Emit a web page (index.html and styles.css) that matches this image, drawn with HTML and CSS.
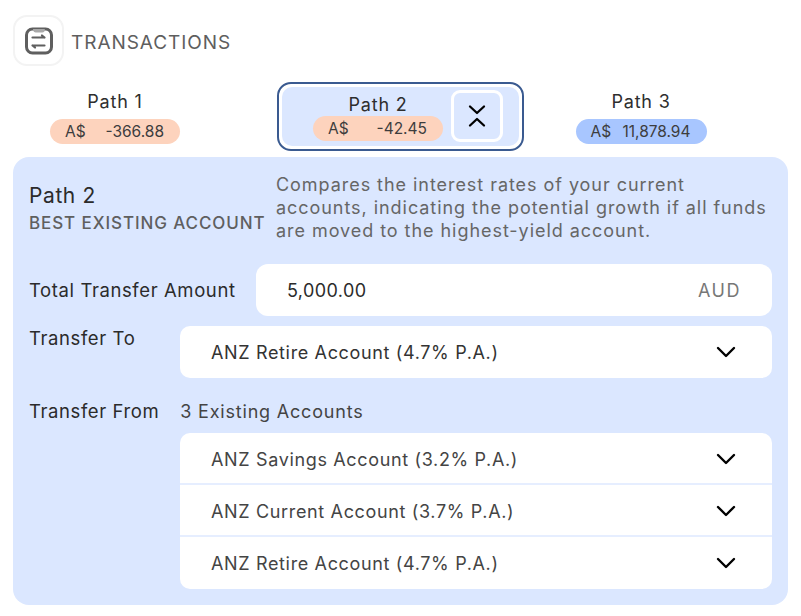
FILE: index.html
```html
<!DOCTYPE html>
<html lang="en">
<head>
<meta charset="utf-8">
<title>Transactions</title>
<link rel="stylesheet" href="styles.css">
</head>
<body>
<main class="page">
  <header class="header">
    <div class="logo">
      <svg width="30" height="30" viewBox="0 0 30 30" fill="none" stroke="#5f5f5f" stroke-width="3" stroke-linecap="round" stroke-linejoin="round">
        <rect x="2.5" y="3" width="25" height="24" rx="6"/>
        <path d="M9.5 3.5H20.5V4Q20.5 6 18.5 6H11.5Q9.5 6 9.5 4Z" fill="#a9a9a9" stroke="#a9a9a9" stroke-width="1"/>
        <path d="M8.5 11.5H20.5M18 9.5L20.5 11.5M8.5 19.5H20.5M8.5 19.5L11 21.5" stroke-width="2.2"/>
      </svg>
    </div>
    <h1 class="title">TRANSACTIONS</h1>
  </header>

  <nav class="tabs">
    <div class="tab tab-plain tab-first">
      <div class="tab-name">Path 1</div>
      <div class="pill pill-neg"><span>A$</span><span>-366.88</span></div>
    </div>
    <div class="tab-active">
      <div class="tab-active-inner">
        <div class="tab tab-center">
          <div class="tab-name">Path 2</div>
          <div class="pill pill-neg"><span>A$</span><span>-42.45</span></div>
        </div>
        <button class="collapse" type="button" aria-label="Collapse">
          <svg width="20" height="26" viewBox="0 0 20 26" fill="none" stroke="#000" stroke-width="2.3" stroke-linecap="round" stroke-linejoin="round">
            <path d="M3 3.5L10 10L17 3.5M3 22.5L10 16L17 22.5"/>
          </svg>
        </button>
      </div>
    </div>
    <div class="tab tab-plain">
      <div class="tab-name">Path 3</div>
      <div class="pill pill-pos"><span>A$</span><span>11,878.94</span></div>
    </div>
  </nav>

  <section class="panel">
    <div class="intro">
      <div class="intro-head">
        <h2 class="panel-title">Path 2</h2>
        <div class="panel-sub">BEST EXISTING ACCOUNT</div>
      </div>
      <p class="desc">Compares the interest rates of your current<br>accounts, indicating the potential growth if all funds<br>are moved to the highest-yield account.</p>
    </div>

    <div class="row row-amount">
      <div class="label">Total Transfer Amount</div>
      <div class="field field-amount"><span class="amount">5,000.00</span><span class="currency">AUD</span></div>
    </div>

    <div class="row row-to">
      <div class="label label-to">Transfer To</div>
      <div class="field select">
        <span>ANZ Retire Account (4.7% P.A.)</span>
        <svg class="chev" width="20" height="12" viewBox="0 0 20 12"><path d="M2 2L10 10L18 2"/></svg>
      </div>
    </div>

    <div class="row row-from">
      <div class="label">Transfer From</div>
      <div class="from-count">3 Existing Accounts</div>
    </div>

    <div class="list">
      <div class="list-row"><span>ANZ Savings Account (3.2% P.A.)</span><svg class="chev" width="20" height="12" viewBox="0 0 20 12"><path d="M2 2L10 10L18 2"/></svg></div>
      <div class="list-row"><span>ANZ Current Account (3.7% P.A.)</span><svg class="chev" width="20" height="12" viewBox="0 0 20 12"><path d="M2 2L10 10L18 2"/></svg></div>
      <div class="list-row"><span>ANZ Retire Account (4.7% P.A.)</span><svg class="chev" width="20" height="12" viewBox="0 0 20 12"><path d="M2 2L10 10L18 2"/></svg></div>
    </div>
  </section>
</main>
</body>
</html>
```

FILE: styles.css
```css
* { box-sizing: border-box; }
html, body { margin: 0; padding: 0; background: #fff; }
body { font-family: Inter, "Open Sans", sans-serif; color: #2b2b2b; }
.page { width: 801px; height: 616px; padding: 15px 13px 0 13px; overflow: hidden; }

.header { display: flex; align-items: center; height: 51px; gap: 7px; }
.logo { width: 51px; height: 51px; border: 2px solid #f3f3f3; border-radius: 14px; display: flex; align-items: center; justify-content: center; }
.title { margin: 0; padding-top: 4px; font-size: 19px; font-weight: 400; color: #5e5e5e; letter-spacing: 0.95px; }

.tabs { display: grid; grid-template-columns: 264px 247px 264px; margin-top: 16px; height: 69px; }
.tab { display: flex; flex-direction: column; align-items: center; }
.tab-plain { padding-top: 9px; }
.tab-first { width: 204px; }
.tab-plain:last-child { width: 234px; }
.tab-name { font-size: 18px; line-height: 22px; letter-spacing: 0.8px; color: #2e2e2e; }
.pill { width: 130px; height: 25px; margin-top: 6px; border-radius: 12.5px; display: flex; align-items: center; justify-content: space-between; padding: 0 16px 0 15px; font-size: 15.5px; color: #3d3d3d; }
.pill-neg { background: #fdd3bd; }
.pill-pos { width: 131px; background: #a8c6ff; }

.tab-active { grid-column: 2; border: 2px solid #3a5a90; border-radius: 14px; padding: 3px; }
.tab-active-inner { height: 59px; background: #dbe7ff; border-radius: 10px; position: relative; }
.tab-center { position: absolute; left: 31px; top: 7px; }
.tab-center .pill { margin-top: 0; }
.collapse { position: absolute; left: 169px; top: 3px; width: 52px; height: 52px; background: #dbe7ff; border: 3px solid #fff; border-radius: 9px; padding: 0; display: flex; align-items: center; justify-content: center; }

.panel { margin-top: 6px; height: 448px; background: #dbe7ff; border-radius: 16px; padding: 16px 16px 0 16px; }
.intro { display: flex; height: 91px; gap: 11px; }
.intro-head { width: 236px; flex: none; }
.panel-title { margin: 10px 0 0 0; font-size: 21px; line-height: 26px; font-weight: 400; letter-spacing: 0.6px; color: #2b2b2b; }
.panel-sub { margin-top: 3px; font-size: 17px; line-height: 22px; font-weight: 500; letter-spacing: 0.9px; color: #5f5f5f; white-space: nowrap; }
.desc { margin: 0; font-size: 18px; line-height: 23px; letter-spacing: 0.95px; color: #666; white-space: nowrap; }

.row { display: flex; }
.label { font-size: 18.5px; line-height: 22px; letter-spacing: 0.6px; color: #2b2b2b; white-space: nowrap; }
.field { background: #fff; display: flex; align-items: center; justify-content: space-between; font-size: 18px; letter-spacing: 0.65px; color: #333; }

.row-amount { align-items: center; justify-content: space-between; }
.field-amount { width: 516px; height: 52px; border-radius: 12px; padding: 0 31px; }
.amount { color: #2b2b2b; letter-spacing: 0.4px; }
.currency { color: #777; letter-spacing: 1.5px; }

.row-to { margin-top: 10px; justify-content: space-between; }
.label-to { margin-top: 1px; }
.select { width: 592px; height: 52px; border-radius: 10px; padding: 0 36px 0 31px; }
.chev { flex: none; fill: none; stroke: #000; stroke-width: 2.4; stroke-linecap: round; stroke-linejoin: round; }

.row-from { margin-top: 22px; align-items: center; height: 22px; gap: 21px; }
.from-count { font-size: 18px; letter-spacing: 0.8px; color: #444; }

.list { margin: 11px 0 0 151px; width: 592px; height: 156px; background: #fff; border-radius: 10px; overflow: hidden; }
.list-row { height: 52px; padding: 2px 36px 0 31px; display: flex; align-items: center; justify-content: space-between; font-size: 18px; letter-spacing: 0.65px; color: #444; border-bottom: 2px solid #e6eeff; }
.list-row:last-child { border-bottom: none; padding-top: 0; }
```
